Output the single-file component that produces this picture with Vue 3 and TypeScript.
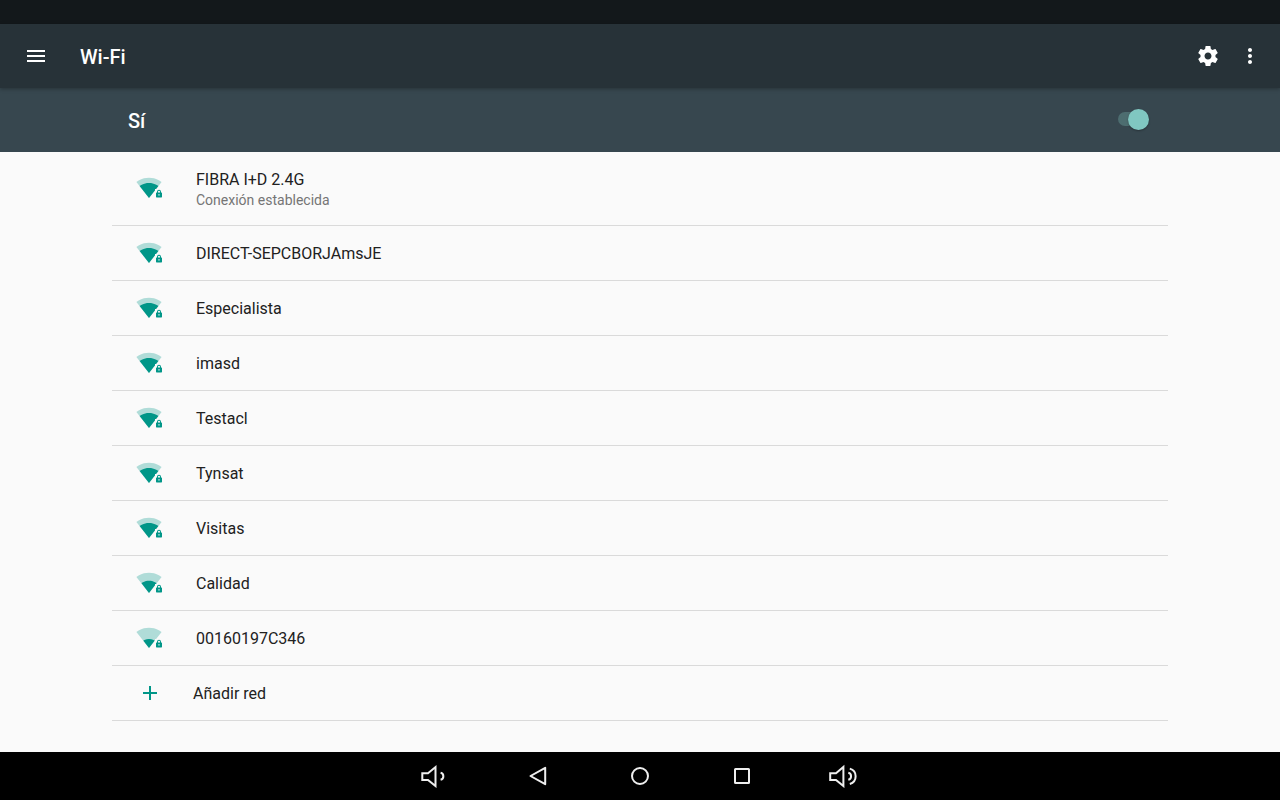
<script setup lang="ts">
import { ref } from 'vue'

interface Network {
  ssid: string
  level: number
  status?: string
}

const enabled = ref(true)

const networks: Network[] = [
  { ssid: 'FIBRA I+D 2.4G', level: 3, status: 'Conexión establecida' },
  { ssid: 'DIRECT-SEPCBORJAmsJE', level: 3 },
  { ssid: 'Especialista', level: 3 },
  { ssid: 'imasd', level: 3 },
  { ssid: 'Testacl', level: 3 },
  { ssid: 'Tynsat', level: 3 },
  { ssid: 'Visitas', level: 3 },
  { ssid: 'Calidad', level: 2 },
  { ssid: '00160197C346', level: 1 },
]

// Filled part of the signal fan, by level
const fans: Record<number, string> = {
  1: 'M13 20.9 7.4 13.7C7.7 13.4 9.8 12 13 12s5.3 1.4 5.6 1.7Z',
  2: 'M13 20.9 5.5 11.3C5.8 11 8.6 8.8 13 8.8s7.2 2.2 7.5 2.5Z',
  3: 'M13 20.9 3.6 9C3.9 8.6 7.5 5.9 13 5.9s9.1 2.7 9.4 3.1Z',
}
</script>

<template>
  <div class="screen">
    <div class="status-bar"></div>
    <header class="app-bar">
      <button class="icon-button" type="button" aria-label="Menú">
        <svg width="24" height="24" viewBox="0 0 24 24"><path fill="#fff" d="M3 18h18v-2H3v2zm0-5h18v-2H3v2zm0-7v2h18V6H3z" /></svg>
      </button>
      <h1>Wi-Fi</h1>
      <button class="icon-button" type="button" aria-label="Ajustes">
        <svg width="24" height="24" viewBox="0 0 24 24"><path fill="#fff" d="M19.43 12.98c.04-.32.07-.64.07-.98s-.03-.66-.07-.98l2.11-1.65c.19-.15.24-.42.12-.64l-2-3.46c-.12-.22-.39-.3-.61-.22l-2.49 1c-.52-.4-1.08-.73-1.69-.98l-.38-2.65C14.46 2.18 14.25 2 14 2h-4c-.25 0-.46.18-.49.42l-.38 2.65c-.61.25-1.17.59-1.69.98l-2.49-1c-.23-.09-.49 0-.61.22l-2 3.46c-.13.22-.07.49.12.64l2.11 1.65c-.04.32-.07.65-.07.98s.03.66.07.98l-2.11 1.65c-.19.15-.24.42-.12.64l2 3.46c.12.22.39.3.61.22l2.49-1c.52.4 1.08.73 1.69.98l.38 2.65c.03.24.24.42.49.42h4c.25 0 .46-.18.49-.42l.38-2.65c.61-.25 1.17-.59 1.69-.98l2.49 1c.23.09.49 0 .61-.22l2-3.46c.12-.22.07-.49-.12-.64l-2.11-1.65zM12 15.5c-1.93 0-3.5-1.57-3.5-3.5s1.57-3.5 3.5-3.5 3.5 1.57 3.5 3.5-1.57 3.5-3.5 3.5z" /></svg>
      </button>
      <button class="icon-button overflow" type="button" aria-label="Más opciones">
        <svg width="24" height="24" viewBox="0 0 24 24"><path fill="#fff" d="M12 8c1.1 0 2-.9 2-2s-.9-2-2-2-2 .9-2 2 .9 2 2 2zm0 2c-1.1 0-2 .9-2 2s.9 2 2 2 2-.9 2-2-.9-2-2-2zm0 6c-1.1 0-2 .9-2 2s.9 2 2 2 2-.9 2-2-.9-2-2-2z" /></svg>
      </button>
    </header>

    <div class="switch-bar">
      <label for="wifi-switch">{{ enabled ? 'Sí' : 'No' }}</label>
      <input id="wifi-switch" v-model="enabled" class="switch" type="checkbox" role="switch" />
    </div>

    <main>
      <ul>
        <li v-for="network in networks" :key="network.ssid">
          <button class="row" :class="{ detailed: network.status }" type="button">
            <svg width="27" height="22" viewBox="0 0 27 22" aria-hidden="true">
              <path fill="#b0dcd8" d="M13 20.9 25.600 5C25.100 4.600 20.400.8 13 .8S.9 4.600.4 5Z" />
              <path fill="#009688" :d="fans[network.level]" />
              <path fill="#fafafa" d="M19 12h8v10h-8z" />
              <path fill="#009688" fill-rule="evenodd" d="M21 15.4v-.6a2 2 0 0 1 4 0v.6h.4a.6.6 0 0 1 .6.6v3.800a.6.6 0 0 1-.6.6h-4.800a.6.6 0 0 1-.6-.6V16a.6.6 0 0 1 .6-.6Zm1 0h2v-.6a1 1 0 0 0-2 0ZM22.400 17.300h1.200v1.200h-1.200Z" />
            </svg>
            <span class="text">
              <span class="name">{{ network.ssid }}</span>
              <span v-if="network.status" class="status">{{ network.status }}</span>
            </span>
          </button>
        </li>
        <li>
          <button class="row add" type="button">
            <svg width="24" height="24" viewBox="0 0 24 24" aria-hidden="true"><path fill="#009688" d="M19 13h-6v6h-2v-6H5v-2h6V5h2v6h6v2z" /></svg>
            <span class="name">Añadir red</span>
          </button>
        </li>
      </ul>
    </main>

    <nav>
      <button type="button" aria-label="Bajar volumen">
        <svg width="32" height="24" viewBox="0 0 32 24"><path d="M2.300 9.200H8L15.500 3v19L8 15.900H2.300ZM20.600 8.800a3.600 3.600 0 0 1 0 7" /></svg>
      </button>
      <button type="button" aria-label="Atrás">
        <svg width="32" height="24" viewBox="0 0 32 24"><path stroke-linejoin="round" d="M8.500 12 23.200 3.800v16.400Z" /></svg>
      </button>
      <button type="button" aria-label="Inicio">
        <svg width="32" height="24" viewBox="0 0 32 24"><circle cx="16" cy="12" r="8" /></svg>
      </button>
      <button type="button" aria-label="Recientes">
        <svg width="32" height="24" viewBox="0 0 32 24"><rect x="9" y="5" width="14" height="14" rx="0.500" /></svg>
      </button>
      <button type="button" aria-label="Subir volumen">
        <svg width="32" height="24" viewBox="0 0 32 24"><path d="M2.200 9.200H8L15.400 3v19L8 15.900H2.200ZM20.300 8.800a3.600 3.600 0 0 1 0 7M21.800 4.600a8 8 0 0 1 0 15.400" /></svg>
      </button>
    </nav>
  </div>
</template>

<style>
body {
  margin: 0;
  background: #fafafa;
}
</style>

<style scoped>
.screen {
  display: flex;
  flex-direction: column;
  min-height: 100vh;
  font-family: Roboto, 'Noto Sans', sans-serif;
  color: #212121;
}

button {
  margin: 0;
  padding: 0;
  border: 0;
  background: none;
  color: inherit;
  font: inherit;
  cursor: pointer;
}

svg {
  display: block;
  flex: none;
}

.status-bar {
  height: 24px;
  background: #13181b;
}

.app-bar {
  position: relative;
  display: flex;
  align-items: center;
  height: 64px;
  padding: 0 12px;
  background: #273238;
  box-shadow: 0 1px 4px rgba(0, 0, 0, 0.3);
}

.icon-button {
  display: grid;
  place-items: center;
  width: 48px;
  height: 48px;
}

.overflow {
  width: 36px;
}

h1 {
  flex: 1;
  margin: 0;
  padding: 2px 0 0 20px;
  color: #fff;
  font-size: 20px;
  font-weight: 500;
  line-height: 24px;
}

.switch-bar {
  display: flex;
  align-items: center;
  justify-content: space-between;
  height: 64px;
  padding: 0 128px;
  background: #37474f;
}

.switch-bar label {
  padding-top: 2px;
  color: #fff;
  font-size: 20px;
  font-weight: 500;
  line-height: 24px;
}

.switch {
  position: relative;
  appearance: none;
  width: 34px;
  height: 22px;
  margin: 0;
  cursor: pointer;
}

.switch::before {
  content: '';
  position: absolute;
  inset: 3px 5px 5px 0;
  border-radius: 7px;
  background: #4d6d70;
}

.switch::after {
  content: '';
  position: absolute;
  top: 0;
  left: 0;
  width: 21px;
  height: 21px;
  border-radius: 50%;
  background: #bdbdbd;
  box-shadow: 0 1px 2px rgba(0, 0, 0, 0.3);
}

.switch:checked::after {
  left: 10px;
  background: #80c7c1;
}

main {
  flex: 1;
  padding: 0 112px;
}

ul {
  margin: 0;
  padding: 0;
  list-style: none;
}

li {
  border-bottom: 1px solid #dadada;
}

.row {
  display: flex;
  align-items: center;
  width: 100%;
  padding: 15px 24px;
  gap: 33px;
  text-align: left;
}

.detailed {
  padding-bottom: 16px;
}

.text {
  display: flex;
  flex-direction: column;
}

.name {
  padding-top: 2px;
  font-size: 16px;
  line-height: 22px;
}

.status {
  color: #757575;
  font-size: 14px;
  line-height: 18px;
}

.add {
  padding-left: 26px;
  gap: 31px;
}

nav {
  display: flex;
  justify-content: center;
  height: 48px;
  background: #000;
}

nav button {
  display: grid;
  place-items: center;
  width: 102px;
}

nav svg {
  fill: none;
  stroke: #eee;
  stroke-width: 2;
}
</style>
